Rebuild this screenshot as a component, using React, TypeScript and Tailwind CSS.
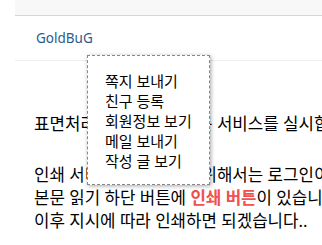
import React from "react";

export default function App() {
  const items = ["쪽지 보내기", "친구 등록", "회원정보 보기", "메일 보내기", "작성 글 보기"];
  return (
    <div
      className="relative w-[322px] h-[245px] overflow-hidden bg-white text-black"
      style={{ fontFamily: '"Noto Sans", "Noto Sans CJK KR", sans-serif' }}
    >
      <div className="ml-[15px]">
        <div className="h-[16px] bg-[#f8f8f8] border-b border-[#d6d6d6]" />
        <div className="h-[45px] pl-[21px] flex items-center border-b border-[#eeeeee] text-[13.5px] text-[#2b5d8c]">
          GoldBuG
        </div>
        <div className="pl-[19px] pt-[51px] text-[16.8px] leading-[23px] whitespace-nowrap">
          <p>표면처리 견적및 인쇄주문 서비스를 실시합니다.</p>
          <p className="mt-[28px]">인쇄 서비스를 이용하기 위해서는 로그인이 필요합니다.</p>
          <p>
            본문 읽기 하단 버튼에 <span className="font-bold text-[#f05050]">인쇄 버튼</span>이 있습니다.
          </p>
          <p>이후 지시에 따라 인쇄하면 되겠습니다..</p>
        </div>
      </div>
      <div className="absolute left-[87px] top-[55px] w-[123px] h-[130px] border border-dashed border-[#888] bg-white shadow-[1px_1px_4px_rgba(0,0,0,0.35)] pl-[17px] pt-[15px] text-[15px] leading-[20px]">
        {items.map((t) => (
          <div key={t}>{t}</div>
        ))}
      </div>
    </div>
  );
}
